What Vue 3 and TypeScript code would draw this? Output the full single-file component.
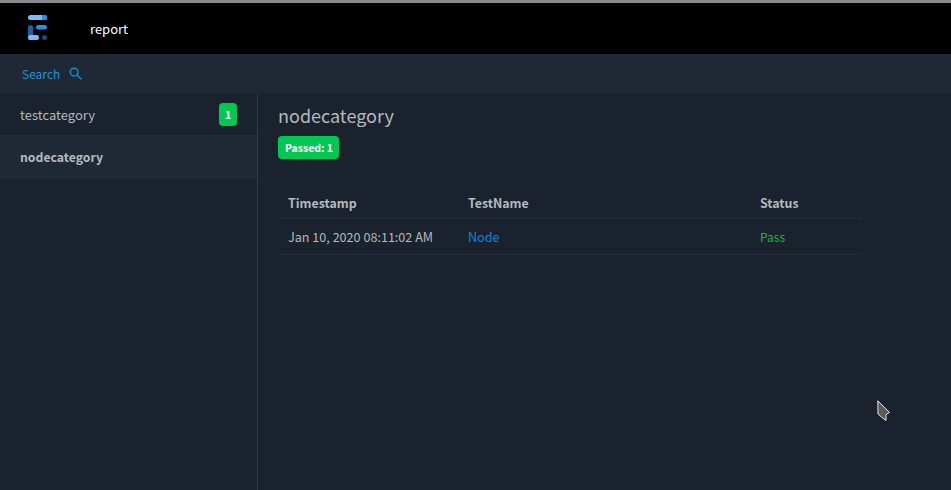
<script setup lang="ts">
const categories = [
  { name: 'testcategory', count: 1, active: false },
  { name: 'nodecategory', count: 0, active: true },
]
const rows = [{ time: 'Jan 10, 2020 08:11:02 AM', name: 'Node', status: 'Pass' }]
</script>

<template>
  <div class="page">
    <div class="chrome"></div>
    <header class="topbar">
      <svg class="logo" width="24" height="26" viewBox="0 0 24 26">
        <rect x="0" y="0" width="19" height="5" rx="2.500" fill="#7cbcf5" />
        <path d="M14 0h2.500a2.500 2.500 0 0 1 0 5H14z" fill="#2b8fe8" />
        <rect x="0" y="10" width="5" height="15" rx="2.500" fill="#1f5fa3" />
        <rect x="8" y="10" width="11" height="4.500" rx="2.250" fill="#2b8fe8" />
        <rect x="0" y="20" width="11" height="5" rx="2.500" fill="#7cbcf5" />
        <circle cx="16.500" cy="22.500" r="2.500" fill="#174a80" />
      </svg>
      <span class="title">report</span>
    </header>
    <div class="searchbar">
      <span class="search-label">Search</span>
      <svg width="13" height="13" viewBox="0 0 14 14" fill="none" stroke="#1391d6" stroke-width="1.500">
        <circle cx="5.500" cy="5.500" r="4.200" />
        <path d="M8.500 8.500l4.800 4.800" />
      </svg>
    </div>
    <div class="body">
      <aside class="sidebar">
        <div v-for="c in categories" :key="c.name" class="cat" :class="{ active: c.active }">
          <span>{{ c.name }}</span>
          <span v-if="c.count" class="count">{{ c.count }}</span>
        </div>
      </aside>
      <main class="content">
        <h1>nodecategory</h1>
        <span class="passed">Passed: 1</span>
        <div class="table">
          <div class="row head">
            <div>Timestamp</div><div>TestName</div><div>Status</div>
          </div>
          <div v-for="r in rows" :key="r.name" class="row">
            <div>{{ r.time }}</div>
            <div class="link">{{ r.name }}</div>
            <div class="pass">{{ r.status }}</div>
          </div>
        </div>
      </main>
    </div>
    <svg class="cursor" width="14" height="22" viewBox="0 0 14 22">
      <path d="M.8.800L12.500 12.500 9 14.500 9 20.500 5 17.500 1 14Z" fill="#5a5a5a" stroke="#e4e4e4" stroke-width="1" />
    </svg>
  </div>
</template>

<style>
html, body { margin: 0; background: #1a222d; }
</style>

<style scoped>
.page {
  position: relative;
  width: 951px;
  height: 490px;
  overflow: hidden;
  background: #1a222d;
  color: #b4b9be;
  font-family: "Noto Sans CJK SC", "Noto Sans", sans-serif;
  font-size: 13px;
  display: flex;
  flex-direction: column;
}
.chrome { height: 3px; background: #8a8d90; }
.topbar {
  height: 51px;
  background: #000;
  display: flex;
  align-items: center;
  padding-left: 28px;
}
.logo { margin-top: -1px; }
.title { margin-left: 38px; color: #fff; font-size: 13px; }
.searchbar {
  height: 40px;
  background: #1f2935;
  display: flex;
  align-items: center;
  gap: 9px;
  padding-left: 22px;
}
.search-label { color: #1496dc; font-size: 12px; line-height: 14px; }
.searchbar svg { margin-top: -2px; }
.body { flex: 1; display: flex; min-height: 0; }
.sidebar { width: 257px; border-right: 1px solid #333b46; flex: none; }
.cat {
  height: 41px;
  border-bottom: 1px solid #262e39;
  display: flex;
  align-items: center;
  justify-content: space-between;
  padding: 0 20px;
}
.cat.active { background: #1f2935; font-weight: 700; font-size: 12.25px; }
.count {
  width: 18px;
  height: 23px;
  border-radius: 4px;
  background: #00c853;
  color: #fff;
  font-size: 10.5px;
  font-weight: 700;
  display: flex;
  align-items: center;
  justify-content: center;
}
.content { flex: 1; padding: 9px 0 0 20px; }
h1 { margin: 0; font-size: 18px; font-weight: 400; line-height: 25px; color: #b4b9be; }
.passed {
  display: block;
  width: fit-content;
  margin-top: 8px;
  height: 23px;
  line-height: 23px;
  padding: 0 6px 0 7px;
  border-radius: 4px;
  background: #00c853;
  color: #fff;
  font-size: 10.5px;
  font-weight: 700;
}
.table { width: 584px; margin-top: 24px; }
.row {
  display: flex;
  height: 36px;
  align-items: center;
  border-bottom: 1px solid #262e39;
  box-sizing: border-box;
  font-size: 12.6px;
}
.row > div { padding: 0 10px; box-sizing: border-box; }
.row > div:nth-child(1) { width: 180px; }
.row > div:nth-child(2) { width: 292px; }
.head { font-weight: 700; font-size: 12.4px; }
.head > div { padding-top: 4px; }
.link { color: #0c88d8; }
.pass { color: #2bb03f; font-size: 12px; }
.cursor { position: absolute; left: 877px; top: 400px; }
</style>
